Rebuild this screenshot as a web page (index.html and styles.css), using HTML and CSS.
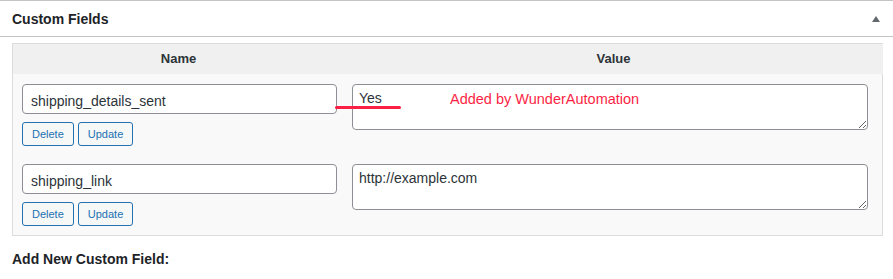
FILE: index.html
```html
<!DOCTYPE html>
<html>
<head>
<meta charset="utf-8">
<link rel="stylesheet" href="styles.css">
</head>
<body>
<div class="postbox">
  <div class="postbox-header">
    <h2 class="postbox-title">Custom Fields</h2>
    <svg class="toggle" width="8" height="6" viewBox="0 0 8 6"><path d="M4 0 L8 6 L0 6 Z" fill="#646970"/></svg>
  </div>
  <div class="inside">
    <div class="list-table">
      <div class="th">Name</div>
      <div class="th">Value</div>

      <div class="cell name-cell">
        <input class="field" type="text" value="shipping_details_sent">
        <div class="actions">
          <button class="btn">Delete</button>
          <button class="btn">Update</button>
        </div>
      </div>
      <div class="cell value-cell">
        <textarea class="value">Yes</textarea>
      </div>

      <div class="cell name-cell last">
        <input class="field" type="text" value="shipping_link">
        <div class="actions">
          <button class="btn">Delete</button>
          <button class="btn">Update</button>
        </div>
      </div>
      <div class="cell value-cell last">
        <textarea class="value">http://example.com</textarea>
      </div>

      <div class="mark-line"></div>
      <div class="mark-text">Added by WunderAutomation</div>
    </div>
    <p class="add-new">Add New Custom Field:</p>
  </div>
</div>
</body>
</html>
```

FILE: styles.css
```css
html, body {
  margin: 0;
  padding: 0;
  background: #ffffff;
}

body {
  font-family: "Liberation Sans", Arial, sans-serif;
  color: #1d2327;
  width: 893px;
  height: 279px;
  overflow: hidden;
}

.postbox {
  border-top: 1px solid #c3c4c7;
}

.postbox-header {
  display: flex;
  align-items: center;
  justify-content: space-between;
  border-bottom: 1px solid #c3c4c7;
  padding: 2px 13px 0 12px;
  height: 33px;
}

.postbox-title {
  margin: 0;
  font-size: 14px;
  font-weight: bold;
  line-height: 33px;
  color: #1d2327;
}

.toggle {
  display: block;
  margin-top: -2px;
}

.inside {
  padding: 6px 10px 0 12px;
}

.list-table {
  position: relative;
  display: grid;
  grid-template-columns: 331px 1fr;
  border: 1px solid #dcdcde;
  background: #f9f9f9;
}

.th {
  background: #f0f0f1;
  height: 30px;
  line-height: 30px;
  text-align: center;
  font-size: 13px;
  font-weight: bold;
  color: #2c3338;
}

.cell {
  padding: 10px 0 8px 0;
}

.cell.last {
  padding-bottom: 9px;
}

.name-cell {
  padding-left: 9px;
  padding-right: 7px;
}

.value-cell {
  padding-left: 8px;
  padding-right: 15px;
}

.field {
  display: block;
  box-sizing: border-box;
  width: 315px;
  height: 30px;
  margin: 0;
  padding: 3px 8px 0;
  line-height: 24px;
  font-family: "Liberation Sans", Arial, sans-serif;
  font-size: 14px;
  color: #2c3338;
  background: #ffffff;
  border: 1px solid #8c8f94;
  border-radius: 4px;
  outline: none;
}

.value {
  display: block;
  box-sizing: border-box;
  width: 516px;
  height: 46px;
  margin: 0;
  padding: 3px 6px;
  line-height: 20px;
  font-family: "Liberation Sans", Arial, sans-serif;
  font-size: 14px;
  color: #2c3338;
  background: #ffffff;
  border: 1px solid #8c8f94;
  border-radius: 4px;
  outline: none;
}

.actions {
  display: flex;
  gap: 4px;
  margin-top: 8px;
}

.btn {
  box-sizing: border-box;
  height: 24px;
  margin: 0;
  padding: 0 9px;
  font-family: "Liberation Sans", Arial, sans-serif;
  font-size: 11px;
  line-height: 22px;
  color: #2271b1;
  background: #f6f7f7;
  border: 1px solid #2271b1;
  border-radius: 3px;
}

.mark-line {
  position: absolute;
  left: 322px;
  top: 62px;
  width: 66px;
  height: 3px;
  border-radius: 2px;
  background: #fb1f45;
}

.mark-text {
  position: absolute;
  left: 437px;
  top: 45px;
  font-size: 14.5px;
  line-height: 20px;
  color: #fb1f45;
  white-space: nowrap;
}

.add-new {
  margin: 13px 0 0;
  font-size: 14px;
  font-weight: bold;
  line-height: 20px;
  color: #1d2327;
}
```
